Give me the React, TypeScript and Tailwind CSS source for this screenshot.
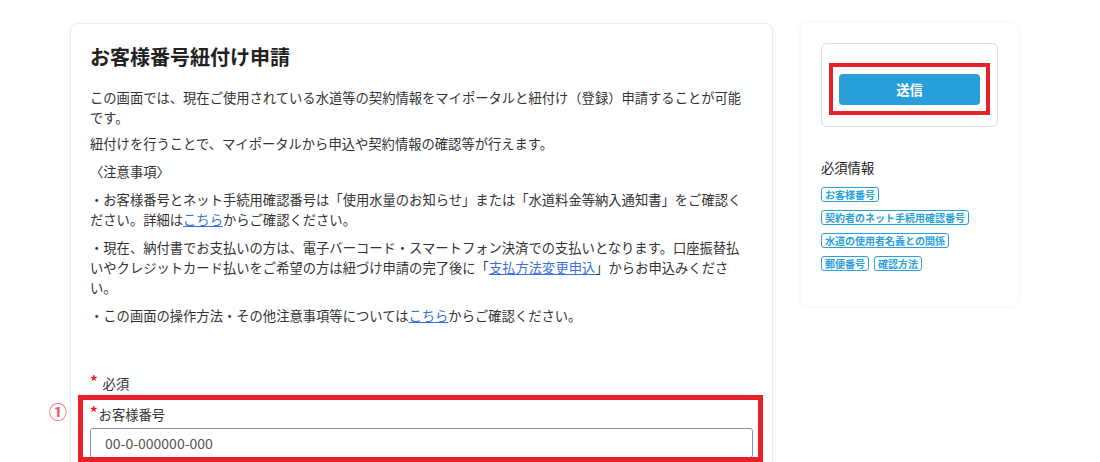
import { ReactNode } from 'react';

const notes: ReactNode[] = [
  <>
    ・お客様番号とネット手続用確認番号は「使用水量のお知らせ」または「水道料金等納入通知書」をご確認ください。詳細は
    <a href="#" className="text-[#3b6fd9] underline">こちら</a>
    からご確認ください。
  </>,
  <>
    ・現在、納付書でお支払いの方は、電子バーコード・スマートフォン決済での支払いとなります。口座振替払いやクレジットカード払いをご希望の方は紐づけ申請の完了後に「
    <a href="#" className="text-[#3b6fd9] underline">支払方法変更申込</a>
    」からお申込みください。
  </>,
  <>
    ・この画面の操作方法・その他注意事項等については
    <a href="#" className="text-[#3b6fd9] underline">こちら</a>
    からご確認ください。
  </>,
];

const requiredTags = [
  ['お客様番号'],
  ['契約者のネット手続用確認番号'],
  ['水道の使用者名義との関係'],
  ['郵便番号', '確認方法'],
];

function Tag({ label }: { label: string }) {
  return (
    <span className="inline-block border border-[#2a9fd8] rounded-[3px] px-[3px] text-[10px] leading-[13px] font-bold text-[#2a9fd8]">
      {label}
    </span>
  );
}

function Req() {
  return <span className="text-[#e8202a] text-[15px] leading-[14px] font-bold">*</span>;
}

export default function App() {
  return (
    <div className="min-h-screen bg-white font-['Noto_Sans_CJK_JP',sans-serif] text-[#333] text-[13.3px] leading-[20px]">
      <div className="flex items-start gap-[28px] pl-[70px] pt-[23px]">
        {/* Main form */}
        <main className="w-[703px] bg-white border border-[#ececec] rounded-[8px] shadow-[0_0_5px_rgba(0,0,0,0.05)] pl-[19px] pr-[27px] pt-[19px] pb-[60px]">
          <h1 className="text-[20px] leading-[28px] font-bold text-[#222] mb-[17px]">お客様番号紐付け申請</h1>

          <p className="mb-[6px]">
            この画面では、現在ご使用されている水道等の契約情報をマイポータルと紐付け（登録）申請することが可能です。
          </p>
          <p className="mb-[8px]">紐付けを行うことで、マイポータルから申込や契約情報の確認等が行えます。</p>
          <p className="mb-[8px]">〈注意事項〉</p>
          {notes.map((n, i) => (
            <p key={i} className="mb-[8px]">
              {n}
            </p>
          ))}

          <div className="mt-[48px] flex items-start gap-[5px]">
            <Req />
            <span>必須</span>
          </div>

          <div className="relative mt-[10px] pt-[1px]">
            <span className="absolute -left-[41px] -top-[3px] text-[18px] leading-[20px] font-bold text-[#f0566a]">①</span>
            <div className="flex items-start gap-[1px]">
              <Req />
              <span>お客様番号</span>
            </div>
            <input
              className="mt-[3px] w-[663px] h-[30px] border border-[#8a93a6] rounded-[3px] px-[14px] text-[14px] outline-none placeholder:text-[#555]"
              placeholder="00-0-000000-000"
            />
            <div className="absolute -left-[12px] -right-[18px] -top-[9px] -bottom-[4px] border-[5px] border-[#e8202a] pointer-events-none" />
          </div>
        </main>

        {/* Side panel */}
        <aside className="w-[217px] bg-white rounded-[8px] shadow-[0_0_6px_rgba(0,0,0,0.07)] px-[20px] pt-[20px] pb-[35px]">
          <div className="border border-[#d9dce2] rounded-[6px] px-[17px] pt-[30px] pb-[21px]">
            <div className="relative">
              <button className="w-full h-[31px] bg-[#299fda] rounded-[4px] text-white font-bold text-[13.3px]">
                送信
              </button>
              <div className="absolute -left-[10px] -right-[10px] -top-[11px] -bottom-[10px] border-[4px] border-[#e8202a] pointer-events-none" />
            </div>
          </div>

          <p className="mt-[31px] text-[#222]">必須情報</p>
          <div className="mt-[9px] flex flex-col gap-[8px]">
            {requiredTags.map((row, i) => (
              <div key={i} className="flex gap-[5px]">
                {row.map(t => (
                  <Tag key={t} label={t} />
                ))}
              </div>
            ))}
          </div>
        </aside>
      </div>
    </div>
  );
}
